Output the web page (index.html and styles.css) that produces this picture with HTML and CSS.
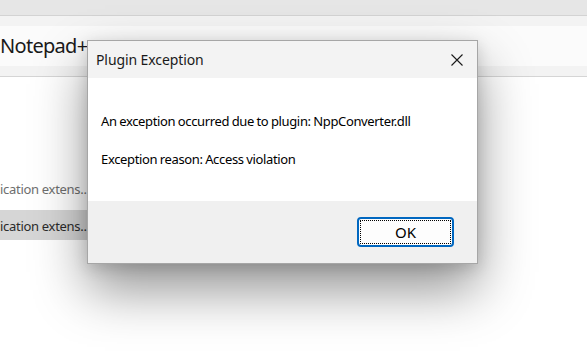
FILE: index.html
```html
<!DOCTYPE html>
<html>
<head>
<meta name="viewport" content="width=device-width, initial-scale=1.0">
<title>Plugin Exception</title>
<link rel="stylesheet" href="styles.css">
</head>
<body>
<div class="app">
  <div class="tabs"></div>
  <div class="toolbar">
    <div class="search">Notepad++</div>
  </div>
  <div class="list">
    <div class="row">ication extens..</div>
    <div class="row selected">ication extens..</div>
  </div>
</div>

<!-- the error dialog sits over the window -->
<div class="dialog" role="dialog">
  <div class="dialog-title">
    <span>Plugin Exception</span>
    <svg class="close" width="12" height="12" viewBox="0 0 12 12">
      <path d="M0.5 0.5 L11.5 11.5 M11.5 0.5 L0.5 11.5" stroke="#1a1a1a" stroke-width="1.1" fill="none"/>
    </svg>
  </div>
  <div class="dialog-body">
    <p>An exception occurred due to plugin: NppConverter.dll</p>
    <p>Exception reason: Access violation</p>
  </div>
  <div class="dialog-footer">
    <button class="btn-ok">OK</button>
  </div>
</div>
</body>
</html>
```
FILE: styles.css
```css
* {box-sizing: border-box;}

body {
  margin: 0;
  font-family: "Noto Sans", "Open Sans", sans-serif;
  background: #fff;
  overflow: hidden;
}

.app {
  height: 356px;
}

.tabs {
  height: 16px;
  background: #e6e6e6;
  border-bottom: 1px solid #d3d3d3;
}

.toolbar {
  height: 61px;
  padding-top: 10px;
  background: #f3f3f3;
  border-bottom: 1px solid #d5d5d5;
}

.search {
  height: 40px;
  background: #fbfbfb;
  font-size: 20px;
  letter-spacing: -0.7px;
  line-height: 40px;
  color: #1a1a1a;
  white-space: nowrap;
  overflow: hidden;
}

.list {
  padding-top: 96px;
}

.row {
  width: 87px;
  height: 30px;
  margin-bottom: 7px;
  font-size: 13px;
  letter-spacing: -0.3px;
  line-height: 32px;
  color: #6e6e6e;
  white-space: nowrap;
}

.row.selected {
  background: #d6d6d6;
  color: #2b2b2b;
}

/* dialog */
.dialog {
  position: absolute;
  left: 87px;
  top: 40px;
  width: 391px;
  height: 224px;
  border: 1px solid #a6a6a6;
  background: #f0f0f0;
  box-shadow: 0 26px 50px rgba(0, 0, 0, .42), 0 4px 14px rgba(0, 0, 0, .14);
  display: flex;
  flex-direction: column;
}

.dialog-title {
  height: 37px;
  background: #f3f3f3;
  display: flex;
  align-items: center;
  justify-content: space-between;
  padding: 0 14px 0 8px;
  font-size: 14px;
  letter-spacing: -0.1px;
  color: #1a1a1a;
}

.dialog-body {
  height: 123px;
  background: #fff;
  padding: 33px 13px 0;
  font-size: 13px;
  letter-spacing: -0.35px;
  word-spacing: -0.5px;
  color: #000;
  white-space: nowrap;
}

.dialog-body p {
  margin: 0 0 18px;
  line-height: 20px;
}

.dialog-footer {
  flex: 1;
  display: flex;
  justify-content: flex-end;
  align-items: flex-start;
  padding: 16px 23px 0 0;
}

.btn-ok {
  width: 97px;
  height: 30px;
  border: 2px solid #0067c0;
  border-radius: 4px;
  background: #fdfdfd;
  font-family: inherit;
  font-size: 15px;
  color: #000;
  outline: 1px dotted #000;
  outline-offset: -4px;
  padding: 0;
}
```
